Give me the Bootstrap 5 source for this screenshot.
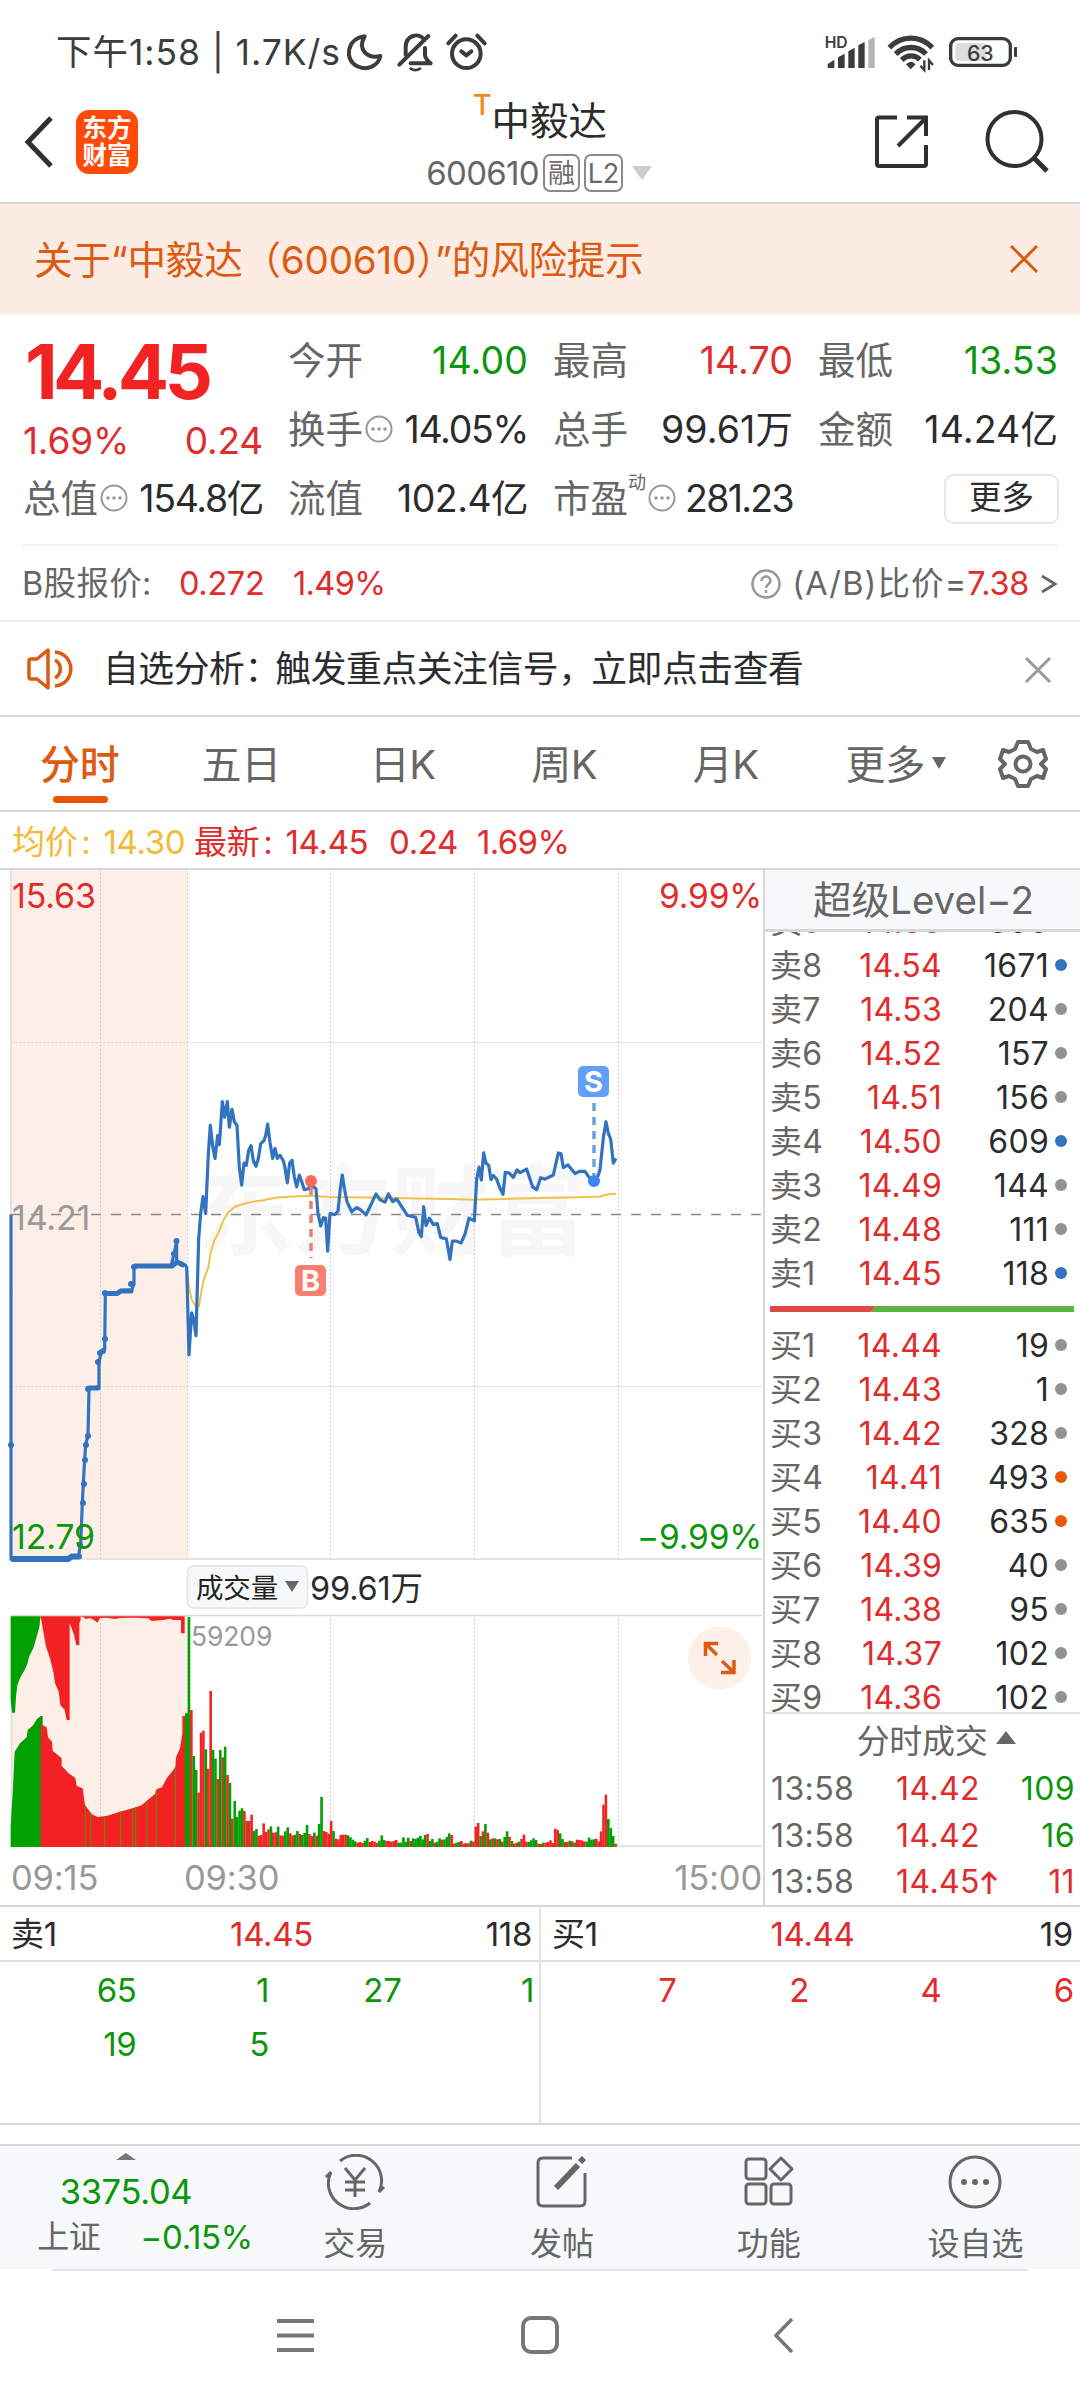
<!DOCTYPE html>
<html lang="zh-CN">
<head>
<meta charset="utf-8">
<meta name="viewport" content="width=device-width, initial-scale=1">
<title>中毅达 600610</title>
<link rel="stylesheet" href="https://cdn.jsdelivr.net/npm/bootstrap@5.3.0/dist/css/bootstrap.min.css">
<style>
:root{--up:#e02c2c;--dn:#0c960c;--ink:#2c2c2e;--sub:#666;--line:#d5d7d9;--brand:#dd5a12;--fill:#f6f8fa}
body{width:1080px;height:2400px;margin:0;overflow:hidden;background:#fff;color:var(--ink);font-family:Inter,"Noto Sans CJK SC",sans-serif;font-size:33px;line-height:1;letter-spacing:-.01em}
svg{display:block;flex:none}
.up{color:var(--up)}.dn{color:var(--dn)}.sub{color:var(--sub)}.brand{color:var(--brand)}
.statusbar{height:92px;padding:12px 63px 0 56px;font-size:35.5px;color:#3c3c3e}
.clock{width:284px;letter-spacing:.027em;white-space:nowrap;padding-top:2px}
.topbar{height:112px;border-bottom:2px solid var(--line);position:relative;padding-bottom:11px}
.logo{width:62px;height:64px;border-radius:13px;background:#ff4a08;color:#fff;font-weight:700;font-size:24.5px;line-height:27px;letter-spacing:0;margin-left:23px}
.titlebox{left:0;right:0;top:0}
.tag-box{border:2px solid #8a8a8c;border-radius:7px;height:38px;color:#6a6a6c;font-size:27px}
.tri-d{width:0;height:0;border:10px solid transparent;border-bottom:0;border-top:14px solid #ccc}
.alertbar{height:110px;background:#fcece3;padding:2px 41px 0 34px;font-size:38.6px;letter-spacing:-.006em}
.quote{height:230px;padding:12px 21px 0 23px;font-size:37.5px;border:0}
.qgrid{display:grid;grid-template-columns:repeat(4,240px);column-gap:25px}
.qcell{display:flex;align-items:center;height:69px;letter-spacing:.003em}
.qcell.tight{letter-spacing:-.035em}
.qcell>:last-child{margin-left:auto}
.qcell .sub{letter-spacing:0}
.bigprice{font-size:76px;font-weight:700;height:92px;line-height:90px;letter-spacing:-.062em;padding-left:2px}
.morebtn{border:2px solid #e6e8ea;border-radius:9px;width:115px;height:50px;font-size:32.5px;letter-spacing:0;margin-right:-1px}
.bshare{height:76px;margin:0 22px;border-top:2px solid #f0f1f2;font-size:32.5px;padding:2px 1px 0 0}
.notice{height:97px;border-top:2px solid #ebebeb;border-bottom:2px solid var(--line);padding:2px 28px 0 25px;font-size:35.8px}
.ktabs{height:95px;border-bottom:2px solid var(--line);font-size:40px;color:var(--sub);padding-top:3px}
.ktabs>div{width:161.5px;text-align:center;position:relative;left:-1px}
.ktabs .on::after{content:"";position:absolute;left:54px;top:51px;width:55px;height:7px;border-radius:4px;background:#ea5504}
.avgline{height:58px;border-bottom:2px solid var(--line);padding:4px 12px 0;font-size:33px}
.mainarea{height:1037px;border-bottom:2px solid var(--line)}
.sidebook{width:317px;border-left:2px solid var(--line);font-size:32px}
.lvhead{height:62px;background:var(--fill);border-bottom:3px solid var(--line);font-size:38.5px;color:var(--sub);letter-spacing:0;padding:2px 0 0 2px}
.bookview{height:782px;overflow:hidden;border-bottom:2px solid #e4e4e4}
.orow{display:flex;align-items:center;height:44px;padding-left:5px;letter-spacing:.008em}
.orow .lb{width:60px;color:var(--sub)}.orow .pr{width:112px;text-align:right;color:var(--up)}.orow .am{width:107px;text-align:right}
.odot{width:12px;height:12px;border-radius:50%;margin-left:6px;margin-top:-2px;background:#909095}
.odot.bl{background:#3173c2}.odot.og{background:#ea5a06}
.ratio{height:6px;margin:10px 5px 12px}
.trow{display:flex;align-items:center;height:46.5px;padding:2px 5px 0 6px;letter-spacing:.012em}
.trow .tm{width:125px;color:var(--sub)}.trow .am{margin-left:auto}
.depth{height:218px;border-bottom:2px solid var(--line)}
.dhead{display:grid;grid-template-columns:1fr auto 1fr;align-items:center;height:55px;border-bottom:2px solid #dfe0e1;padding:1px 7px 0 11px}
.dhead>:last-child{text-align:right}
.dnums{display:grid;grid-template-columns:repeat(4,132.5px);text-align:right;line-height:54px;padding-top:1px}
.botnav{height:125px;margin-top:19px;border-top:2px solid var(--line);background:var(--fill);font-size:32px;color:var(--sub)}
.botnav .it{width:206.7px;padding-top:8px}
.botnav .it span{margin-top:18px;letter-spacing:0}
.indexbox{width:252px;padding-top:7px}
.indexline{margin-top:11px;gap:40px;padding-left:38px;white-space:nowrap}
.sysnav{height:130px;padding:44px 0 0 277px}
text{letter-spacing:-.005em}
</style>
<script src="https://cdn.jsdelivr.net/npm/bootstrap@5.3.0/dist/js/bootstrap.bundle.min.js"></script>
</head>
<body>
<header class="statusbar d-flex align-items-center">
  <span class="clock">下午1:58 | 1.7K/s</span>
  <svg width="150" height="42" viewBox="0 0 150 42"><g transform="translate(0 -11) scale(.333333)" fill="none" stroke="#3c3c3e" stroke-width="12" stroke-linecap="round" stroke-linejoin="round">
    <path d="M74 49C20 56 12 118 50 138c32 17 66-2 71-30C84 118 50 88 74 49Z"/>
    <path d="M178 134 265 48M197 104V82c0-38 40-44 53-26M255 84v20c0 12 8 18 17 26H212" /><path d="M212 146q14 9 28 0" stroke-width="8"/>
    <circle cx="379" cy="101" r="43"/><path d="m364 94 15 12 15-12M325 70 347 47M434 70 412 47"/>
  </g></svg>
  <svg class="ms-auto" width="207" height="44" viewBox="0 0 207 44"><g transform="translate(0 -10) scale(.333333)" fill="#3c3c3e">
    <text x="44" y="83" font-size="47" font-weight="600">HD</text>
    <path d="M53 144V132L73 119V144ZM84 144V112L104 101V144ZM115 144V94L134 83V144ZM145 144V76L164 66V144Z"/><path d="M175 144V60L194 51V144Z" fill="#b5b5b5"/>
    <g fill="none" stroke="#3c3c3e" stroke-width="16"><path d="M238 83C274 45 331 45 367 83M257 102C283 76 323 76 348 102M275 120C292 104 314 104 330 119"/></g><path d="M288 133q15-15 29 0L302 148Z"/><path d="M343 121V150L331 137M357 150V121L369 135" stroke="#3c3c3e" stroke-width="7" fill="none"/>
    <rect x="422" y="56" width="179" height="80" rx="22" fill="none" stroke="#3c3c3e" stroke-width="10"/><rect x="436" y="69" width="94" height="54" rx="12" fill="#ddd"/><rect x="612" y="81" width="11" height="30" rx="4"/>
    <text x="511" y="122" font-size="64" font-weight="500" text-anchor="middle">63</text></g>
  </svg>
</header>

<nav class="topbar d-flex align-items-center">
  <svg width="53" height="60" fill="none" stroke="#303032" stroke-width="5"><path d="M51 6 28 30l23 24"/></svg>
  <div class="logo d-flex flex-column justify-content-center text-center"><div>东方</div><div>财富</div></div>
  <div class="position-absolute titlebox d-flex flex-column align-items-center">
    <div class="d-flex align-items-start" style="height:62px"><span style="color:#f08a1c;font-size:28.500px;margin-top:-1px;font-weight:500">T</span><span style="font-size:38.5px;margin-top:10px;letter-spacing:0">中毅达</span></div>
    <div class="d-flex align-items-center sub" style="margin-left:-2px"><span style="margin-right:4px;letter-spacing:-.02em">600610</span>
      <span class="tag-box d-flex align-items-center" style="padding:0 3px;margin-right:4px">融</span><span class="tag-box d-flex align-items-center" style="padding:0 2px">L2</span><span class="tri-d" style="margin-left:9px"></span></div>
  </div>
  <svg class="ms-auto" width="210" height="74" viewBox="0 0 210 74" fill="none" stroke="#303032" stroke-width="4"><path d="M27 12.500H9Q7 12.500 7 14.500V59Q7 61 9 61H54Q56 61 56 59V40M37 12.500H56V31M56 13 28 41"/><circle cx="144.500" cy="34" r="27"/><path d="m163 52 14 14" stroke-width="5"/></svg>
</nav>

<section class="alertbar brand d-flex align-items-center justify-content-between">
  <span>关于“中毅达（600610）”的风险提示</span>
  <svg style="margin-top:-2px" width="30" height="30" stroke="#dd5a12" stroke-width="3"><path d="m2 2 26 26M28 2 2 28"/></svg>
</section>

<section class="quote">
  <div class="qgrid">
    <div><div class="bigprice up" style="color:#f12323">14.45</div><div class="d-flex justify-content-between up" style="letter-spacing:-.005em;margin-top:4px;font-size:37px"><span>1.69%</span><span>0.24</span></div></div>
    <div><div class="qcell"><span class="sub">今开</span><span class="dn">14.00</span></div><div class="qcell tight"><span class="sub">换手</span><svg width="30" height="30"><use href="#dotc"/></svg><span>14.05%</span></div></div>
    <div><div class="qcell"><span class="sub">最高</span><span class="up">14.70</span></div><div class="qcell"><span class="sub">总手</span><span>99.61万</span></div></div>
    <div><div class="qcell"><span class="sub">最低</span><span class="dn">13.53</span></div><div class="qcell"><span class="sub">金额</span><span>14.24亿</span></div></div>
    <div class="qcell tight"><span class="sub">总值</span><svg width="30" height="30"><use href="#dotc"/></svg><span>154.8亿</span></div>
    <div class="qcell"><span class="sub">流值</span><span style="letter-spacing:-.015em">102.4亿</span></div>
    <div class="qcell tight"><span class="sub">市盈</span><span class="sub" style="font-size:18px;margin-top:-32px">动</span><svg width="30" height="30"><use href="#dotc"/></svg><span style="letter-spacing:-.045em">281.23</span></div>
    <div class="qcell"><span class="morebtn d-flex align-items-center justify-content-center">更多</span></div>
  </div>
  <svg width="0" height="0"><defs><g id="dotc"><circle cx="16" cy="14" r="12.5" fill="none" stroke="#999" stroke-width="2"/><g fill="#999"><circle cx="10" cy="14" r="1.8"/><circle cx="16" cy="14" r="1.8"/><circle cx="22" cy="14" r="1.8"/></g></g></defs></svg>
</section>

<section class="bshare d-flex align-items-center">
  <span class="sub" style="width:157px;letter-spacing:.01em">B股报价:</span><span class="up" style="width:114px">0.272</span><span class="up" style="letter-spacing:-.02em">1.49%</span>
  <svg class="ms-auto" width="41" height="32" fill="none"><circle cx="15" cy="16" r="13.5" stroke="#999" stroke-width="2.5"/><path d="M10.500 13c0-6 9-6 9 0 0 3-4.500 3-4.500 7M15 22v3" stroke="#999" stroke-width="2.500"/></svg>
  <span class="sub" style="letter-spacing:.034em">(A/B)比价=</span><span class="up">7.38</span><svg width="28" height="26" fill="none" stroke="#666" stroke-width="3"><path d="m13 5 13 8-13 8"/></svg>
</section>

<section class="notice d-flex align-items-center">
  <svg width="78" height="44" viewBox="-2 1 78 44" fill="none" stroke="#dd5a12" stroke-width="3.500"><path d="M2 14q0-2 2-2h6L21 3v38L10 32H4q-2 0-2-2ZM28 13c7 4 7 14 0 18M28 5c21 2 21 32 0 34" stroke-linejoin="round"/></svg>
  <span style="letter-spacing:-.012em">自选分析<span style="letter-spacing:-.14em">：</span>触发重点关注信号<span style="letter-spacing:-.08em">，</span>立即点击查看</span>
  <svg class="ms-auto" width="28" height="28" stroke="#999" stroke-width="3"><path d="m2 2 24 24M26 2 2 26"/></svg>
</section>

<nav class="ktabs d-flex align-items-center">
  <div class="on brand fw-medium">分时</div><div>五日</div><div>日K</div><div>周K</div><div>月K</div>
  <div class="d-flex align-items-center" style="padding-left:39px">更多<span class="tri-d" style="border-width:12px 7px 0;border-top-color:#666;margin-left:7px;margin-top:-4px"></span></div>
  <svg style="margin:-3px 0 0 28px" width="52" height="52" viewBox="-26 -26 52 52" fill="none" stroke="#666" stroke-width="4" stroke-linejoin="round"><path d="M-5-22H5L8-15 14-12 20-14 23-5 18 0 23 5 20 14 14 12 8 15 5 22H-5L-8 15-14 12-20 14-23 5-18 0-23-5-20-14-14-12-8-15Z"/><circle r="7.500"/></svg>
</nav>

<section class="avgline d-flex align-items-center">
  <span style="color:#f5b935;width:182px">均价<span style="margin:0 4px">:</span> 14.30</span><span class="up" style="width:195px">最新<span style="margin:0 4px">:</span> 14.45</span><span class="up" style="width:88px">0.24</span><span class="up" style="letter-spacing:-.02em">1.69%</span>
</section>

<main class="mainarea d-flex">
  <svg width="763" height="1033" viewBox="0 1 763 1033" font-size="34">
    <rect x="11" y="0" width="176" height="689" fill="#fdeee7"/><rect x="11" y="746" width="176" height="231" fill="#fdeee7"/>
    <text x="196" y="378" font-size="98" font-weight="700" fill="#f7f7f7">东方财富</text>
    <g stroke="#cfcfcf" stroke-width="1" stroke-dasharray="2 2"><path d="M11.500 173.500H762M11.500 517.500H762M100.500 0V689M187.500 0V689M330.500 0V689M474.500 0V689M618.500 0V689M100.500 746V977M187.500 746V977M330.500 746V977M474.500 746V977M618.500 746V977"/></g>
    <path d="M11 0V690H762M11 746.500H762M11.500 746V977H762" fill="none" stroke="#dcdcdc" stroke-width="1.500"/>
    <path d="M11 345.500H762" stroke="#888" stroke-width="1.600" stroke-dasharray="10 10"/>
    <g fill="none" transform="translate(0 -9) scale(.333333 .459184)" stroke-linejoin="round">
      <path vector-effect="non-scaling-stroke" stroke="#f3bf4b" stroke-width="2" d="M560 884 566 925 575 958 588 972 597 972 604 940 612 912 625 887 632 855 642 830 655 812 670 785 685 767 705 755 730 749 760 744 790 741 830 735 880 733 935 731 985 734 1100 735 1260 737 1350 738 1420 740 1510 738 1700 735 1800 733 1825 728 1848 727"/>
      <g stroke="#3273bf" stroke-width="3.200"><path vector-effect="non-scaling-stroke" d="M33 772V1522H205L210 1517H235L242 1490 247 1400 250 1358 254 1305 257 1273 264 1253 267 1152 297 1147 297 1094 304 1070 314 1065 316 942 350 945 360 938 395 936 402 924V885H513L522 858 530 830V876L545 878 560 884"/>
      <path vector-effect="non-scaling-stroke" d="M560 884 567 1078 575 986 581 1000 588 1036 596 825 602 770 609 733 617 770 625 640 631 578 638 623 645 650 653 600 658 620 667 526 674 560 682 526 688 582 696 543 703 570 711 578 718 670 725 708 732 660 739 665 746 632 753 622 760 655 768 667 775 650 782 618 792 611 797 600 803 575 810 615 818 650 825 628 832 650 840 643 850 655 855 670 862 703 869 660 876 654 883 690 890 712 898 686 905 700 913 718 925 716 933 708 948 716 954 770 962 797 970 779 977 780 983 852 990 770 1005 772 1014 765 1021 715 1027 686 1033 715 1041 744 1055 766 1070 757 1082 762 1098 773 1112 752 1128 727 1140 740 1155 745 1165 727 1178 744 1190 738 1205 755 1222 774 1247 778 1257 812 1264 820 1271 755 1278 796 1288 780 1300 794 1312 792 1322 822 1339 825 1350 870 1357 830 1370 830 1383 834 1395 815 1407 780 1423 786 1430 695 1437 669 1444 697 1451 638 1458 660 1466 665 1473 696 1480 687 1490 695 1500 715 1509 728 1516 680 1528 682 1540 691 1551 675 1560 681 1580 673 1587 688 1598 712 1610 718 1622 692 1635 695 1660 686 1668 660 1675 638 1683 640 1690 670 1704 664 1725 683 1738 678 1755 678 1770 694 1790 696 1800 675 1810 605 1818 570 1825 595 1832 608 1840 660 1848 650"/></g>
    </g>
    <g fill="#3273bf" id="ticks"></g>
    <path d="M13 690H68L72 687.500H79" stroke="#3273bf" stroke-width="6" fill="none" stroke-linecap="round"/>
    <path d="M106 424.500H117L121 422H131M135 397H172L177 393 183 396M89 519H98" stroke="#3273bf" stroke-width="5" fill="none" stroke-linecap="round"/>
    <circle cx="311" cy="312" r="6" fill="#fb6a58"/><path d="M311 318V389" stroke="#e97f70" stroke-width="3.500" stroke-dasharray="8 6"/><rect x="295" y="396" width="31" height="31" rx="5" fill="#fb7f6e"/><text x="310.500" y="422" font-size="29" font-weight="700" fill="#fff" text-anchor="middle">B</text>
    <circle cx="594" cy="312" r="6" fill="#3d86f0"/><path d="M594 234V306" stroke="#6aa2e0" stroke-width="3.500" stroke-dasharray="8 6"/><rect x="578" y="197" width="31" height="31" rx="5" fill="#60a0fa"/><text x="593.500" y="223" font-size="29" font-weight="700" fill="#fff" text-anchor="middle">S</text>
    <text x="12" y="39" fill="#e02c2c">15.63</text><text x="12" y="360.500" fill="#999">14.21</text><text x="12" y="680" fill="#0c960c">12.79</text>
    <g text-anchor="end" font-size="33.500"><text x="762" y="39" fill="#e02c2c" letter-spacing="-.02em">9.99%</text><text x="762" y="680" fill="#0c960c" letter-spacing="-.02em">−9.99%</text></g>
    <rect x="187.500" y="697" width="120" height="42" rx="6" fill="#f6f8fa" stroke="#e2e4e6" stroke-width="1.500"/><text x="196" y="729" font-size="27.500" fill="#222">成交量</text><path d="M285 712h14l-7 11Z" fill="#666"/><text x="310" y="731" font-size="32.500" fill="#2c2c2e">99.61万</text>
    <g transform="translate(0 671) scale(.333333)">
      <path fill="#02a002" d="M32 229H122L118 262 110 290 100 325 88 348 82 372 74 390 62 410 52 435 48 470 45 518H36L32 480Z"/>
      <path fill="#f32222" d="M122 229H242V240L238 250V315H229L222 285 214 262 209 250V540H200L194 510 181 495 176 455 165 430 160 395 150 355 138 320 130 275Z"/>
      <path fill="#f32222" d="M240 229H554V280H543V240H520L510 236 490 240 455 243 445 235 400 233 360 234 345 237 320 233 300 234 292 248 282 240 270 234 258 237 250 232Z"/>
      <path fill="#02a002" d="M32 921V860L38 760 44 635 60 610 80 592 83 570 100 555 110 538 122 528H128V921Z"/>
      <path fill="#f32222" d="M122 921V553L140 562 144 592 156 605 158 632 185 655V678L206 700 226 714 230 738 248 745 255 795 275 822 292 831 320 828 355 817 400 804 425 796 440 782 465 762 470 748 486 742 500 715 512 700 526 682 528 652 540 625 547 580V528H556V921Z"/>
      <path stroke="#7a7a10" stroke-width="4" d="M256 921V797M272 921V822M314 921V828M362 921V814M399 921V805M407 921V802M441 921V782M469 921V750M526 921V682"/>
      <path fill="#02a002" d="M555 921V520H564V921Z"/><g id="vol"></g>
    </g>
    <text x="191" y="777" font-size="26.500" fill="#999">59209</text>
    <circle cx="719.500" cy="789" r="31.500" fill="#fdf0e8"/><path d="M705.500 787V774.500H718M706 775 717 786M734 791V803.500H721M733.500 803 722 792" fill="none" stroke="#e05a12" stroke-width="3.500"/>
    <g fill="#999" font-size="34.500"><text x="11" y="1021">09:15</text><text x="184" y="1021">09:30</text><text x="762" y="1021" text-anchor="end">15:00</text></g>
  </svg>
  <aside class="sidebook">
    <div class="lvhead d-flex align-items-center justify-content-center">超级Level−2</div>
    <div class="bookview">
      <div id="asks" style="margin-top:-32px"></div>
      <svg class="ratio" width="304" height="6"><path d="M0 0H106L101 6H0Z" fill="#e04848"/><path d="M106 0H304V6H101Z" fill="#5ab544"/></svg>
      <div id="bids"></div>
    </div>
    <div class="d-flex align-items-center justify-content-center sub" style="height:51px;padding:3px 0 0 28px;font-size:33px">分时成交<span class="tri-d" style="border:10px solid transparent;border-top:0;border-bottom:13px solid #666;margin-left:9px;margin-top:-8px"></span></div>
    <div class="trow"><span class="tm">13:58</span><span class="up">14.42</span><span class="am dn">109</span></div>
    <div class="trow"><span class="tm">13:58</span><span class="up">14.42</span><span class="am dn">16</span></div>
    <div class="trow"><span class="tm">13:58</span><span class="up">14.45</span><svg style="margin-left:-2px" width="20" height="28" fill="none" stroke="#e02c2c" stroke-width="3"><path d="M11 26V5M4 12l7-7 7 7"/></svg><span class="am up">11</span></div>
  </aside>
</main>

<section class="depth d-flex">
  <div style="width:541px;border-right:2px solid #e4e4e4"><div class="dhead"><span>卖1</span><span class="up">14.45</span><span>118</span></div>
    <div class="dnums dn" style="padding-left:4px"><span>65</span><span>1</span><span>27</span><span>1</span><span>19</span><span>5</span></div></div>
  <div class="flex-fill"><div class="dhead"><span>买1</span><span class="up">14.44</span><span>19</span></div>
    <div class="dnums up" style="padding-left:3px"><span>7</span><span>2</span><span>4</span><span>6</span></div></div>
</section>

<nav class="botnav d-flex">
  <div class="indexbox d-flex flex-column align-items-center"><span class="tri-d" style="border:10px solid transparent;border-top:0;border-bottom:7px solid #777"></span>
    <span class="dn" style="font-size:34.500px;margin-top:15px">3375.04</span><div class="indexline d-flex align-items-center"><span>上证</span><span class="dn" style="font-size:33px">−0.15%</span></div></div>
  <div class="it d-flex flex-column align-items-center"><svg width="62" height="56" viewBox="-31 -28 62 56" fill="none" stroke="#666" stroke-width="3"><path d="M-15-21A25.500 25.500 0 0 1 24 10l5-5M15 21A25.500 25.500 0 0 1-24-10l-5 5M-10-14 0-2 10-14M0-2V15M-10 0H10M-10 8H10"/></svg><span>交易</span></div>
  <div class="it d-flex flex-column align-items-center"><svg width="56" height="56" viewBox="0 0 56 56" fill="none" stroke="#666" stroke-width="3"><path d="M38 4H9Q4 4 4 9V47Q4 52 9 52H46Q51 52 51 47V19"/><path d="M22 34 44 11" stroke-width="6"/><path d="m46 8 4-4" stroke-width="6"/></svg><span>发帖</span></div>
  <div class="it d-flex flex-column align-items-center"><svg width="56" height="56" viewBox="0 0 56 56" fill="none" stroke="#666" stroke-width="3"><rect x="5" y="5" width="20" height="20" rx="3"/><rect x="5" y="30" width="20" height="20" rx="3"/><rect x="30" y="30" width="20" height="20" rx="3"/><path d="M40 4 51 15 40 26 29 15Z" stroke-linejoin="round"/></svg><span>功能</span></div>
  <div class="it d-flex flex-column align-items-center"><svg width="56" height="56" viewBox="-28 -28 56 56" fill="none" stroke="#666" stroke-width="3"><circle r="25"/><g fill="#666" stroke="none"><circle cx="-11" r="3"/><circle r="3"/><circle cx="11" r="3"/></g></svg><span>设自选</span></div>
</nav>
<div style="height:2px;margin:0 52px;background:#e2e4e6"></div>
<footer class="sysnav">
  <svg width="520" height="42" fill="none" stroke="#777" stroke-width="4"><path d="M0 6H37M0 20.500H37M0 35H37"/><rect x="246" y="3" width="34" height="34" rx="8"/><path d="M515 4 499 20.500 515 37" stroke-width="3.500"/></svg>
</footer>

<script>
// order book: [label, price, amount, dot class]
const row = r => `<div class="orow"><span class="lb">${r[0]}</span><span class="pr">${r[1]}</span><span class="am">${r[2]}</span><i class="odot ${r[3] || ''}"></i></div>`;
document.getElementById('asks').innerHTML = [['卖9','14.55','300'],['卖8','14.54','1671','bl'],['卖7','14.53','204'],['卖6','14.52','157'],['卖5','14.51','156'],['卖4','14.50','609','bl'],['卖3','14.49','144'],['卖2','14.48','111'],['卖1','14.45','118','bl']].map(row).join('');
document.getElementById('bids').innerHTML = [['买1','14.44','19'],['买2','14.43','1'],['买3','14.42','328'],['买4','14.41','493','og'],['买5','14.40','635','og'],['买6','14.39','40'],['买7','14.38','95'],['买8','14.37','102'],['买9','14.36','102']].map(row).join('');
// one bar per minute; top edge measured down to the baseline at 921
const bars = 'G231 R510 G648 G690 R758 R578 R572 G628 R686 R453 G630 G656 R717 G630 M652 G620 R705 G729 R836 G783 G831 G812 G805 R813 M843 R843 R824 G873 G867 R887 R885 R850 R876 R868 G859 R878 R877 G860 R886 R887 G874 G862 R880 R886 G884 G873 R882 G885 G879 G855 R882 R888 G878 R887 G852 G771 R873 R876 R881 R843 G873 R896 R898 R885 R884 R884 G886 G892 G899 G904 R908 R906 R909 G902 G894 R906 R903 R905 R909 G902 G886 G900 R903 R903 R905 R903 R900 G908 G908 G892 G905 G893 R903 G895 G897 G893 G888 G898 G885 R882 G903 G897 R908 G905 G895 R899 G898 G891 G880 R885 R911 G908 G906 R903 R911 R909 R910 G902 R905 R860 R849 G888 R874 G852 R878 G898 R895 G895 R898 G897 R905 G891 G874 R890 G903 R911 R908 G905 R897 R884 R905 G906 G901 G895 G900 R911 R912 G908 R908 R906 R901 R909 R866 R870 G880 G897 R906 R906 G902 R904 G908 R899 R900 R901 R904 G905 G893 G899 G898 R896 R904 R874 R794 R764 G837 G864 G888 R911'.split(' ');
const fill = {R:'#f02626', G:'#02a002', M:'#a8501c'}, step = (1850 - 563) / bars.length;
document.getElementById('vol').innerHTML = bars.map((b, i) => `<rect x="${(563 + i * step).toFixed(1)}" y="${b.slice(1)}" width="${(step + .6).toFixed(1)}" height="${921 - b.slice(1)}" fill="${fill[b[0]]}"/>`).join('');
// call auction ticks
document.getElementById('ticks').innerHTML = [[11,576],[80,676],[83,634],[84,615],[85,591],[86,576],[88,567],[88,520],[98,493],[100,484],[103,482],[105,470],[105,424],[131,415],[134,398],[174,385],[176.500,372]].map(p => `<circle cx="${p[0]}" cy="${p[1]}" r="3"/>`).join('');
</script>
</body>
</html>
